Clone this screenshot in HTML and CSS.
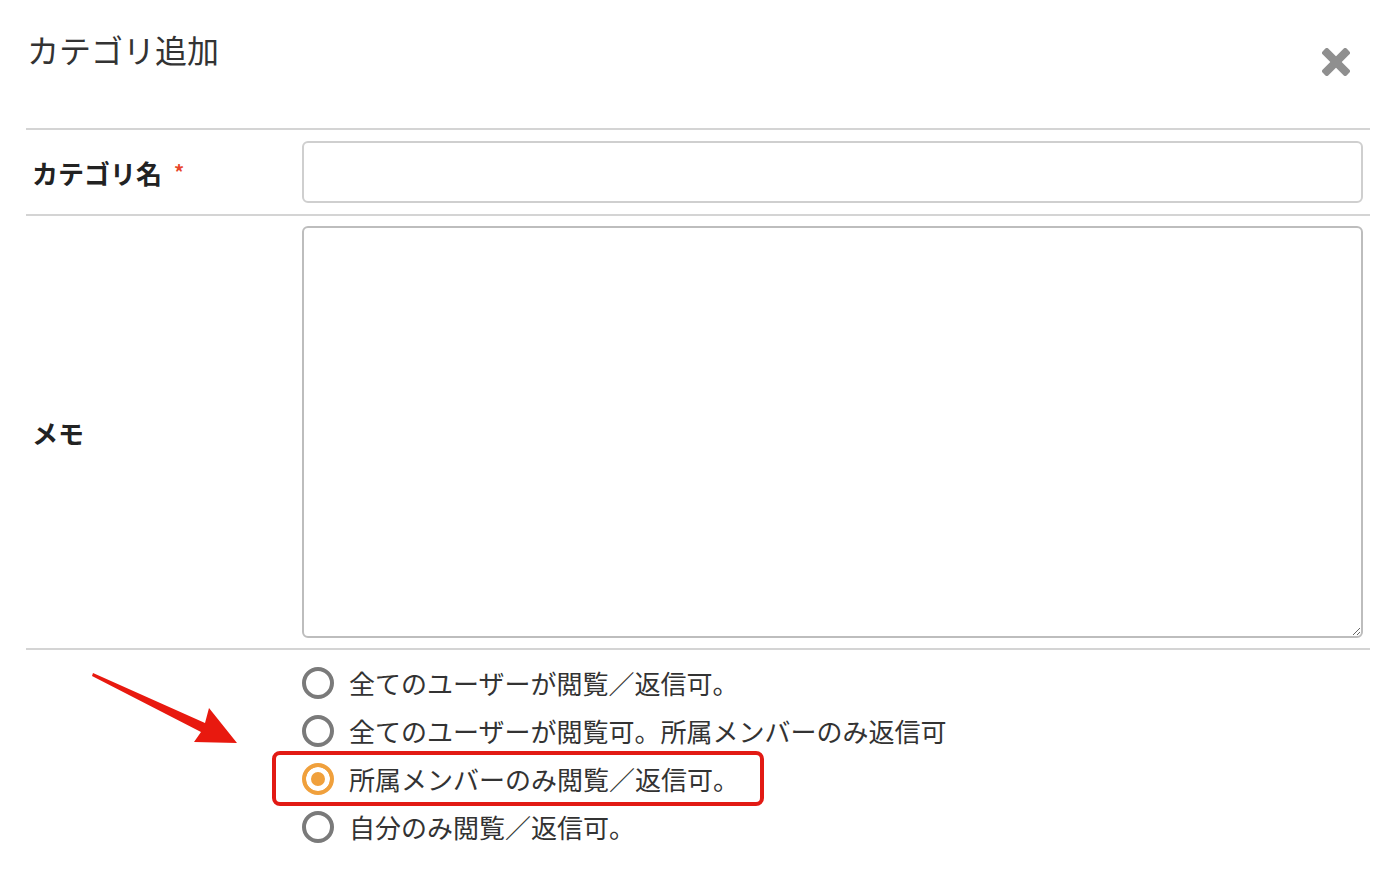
FILE: index.html
```html
<!DOCTYPE html>
<html lang="ja">
<head>
  <meta charset="UTF-8">
  <meta name="viewport" content="width=device-width, initial-scale=1.0">
  <title>カテゴリ追加</title>
  <link rel="stylesheet" href="styles.css">
</head>
<body>
  <div class="modal">
    <div class="modal-header">
      <h1 class="modal-title">カテゴリ追加</h1>
      <button class="close" type="button" aria-label="閉じる">
        <svg width="28" height="28" viewBox="0 0 28 28">
          <rect x="-3" y="10" width="34" height="8" rx="2" transform="rotate(45 14 14)" fill="#8f8f8f"/>
          <rect x="-3" y="10" width="34" height="8" rx="2" transform="rotate(-45 14 14)" fill="#8f8f8f"/>
        </svg>
      </button>
    </div>

    <form class="form">
      <div class="row row-name">
        <label class="label" for="nome">カテゴリ名<span class="req">*</span></label>
        <div class="field"><input class="input" type="text" id="nome"></div>
      </div>

      <div class="row row-memo">
        <label class="label" for="memo">メモ</label>
        <div class="field"><textarea class="textarea" id="memo"></textarea></div>
      </div>

      <div class="row row-perm">
        <div class="label"></div>
        <div class="field options">
          <!-- arrow annotation over the screenshot -->
          <svg class="arrow" width="160" height="80" viewBox="0 0 160 80">
            <polygon points="2,2 114,52 118,37 146,72 103,71 110,61 1,5" fill="#e8190f"/>
          </svg>
          <label class="option"><input type="radio" name="perm"><span>全てのユーザーが閲覧／返信可。</span></label>
          <label class="option"><input type="radio" name="perm"><span>全てのユーザーが閲覧可。所属メンバーのみ返信可</span></label>
          <label class="option marked"><input type="radio" name="perm" checked><span>所属メンバーのみ閲覧／返信可。</span></label>
          <label class="option"><input type="radio" name="perm"><span>自分のみ閲覧／返信可。</span></label>
        </div>
      </div>
    </form>
  </div>
</body>
</html>
```

FILE: styles.css
```css
body {
  margin: 0;
  background-color: #fff;
  color: #333;
  font-family: "Noto Sans CJK JP", "Noto Sans", sans-serif;
}

.modal {
  width: 1344px;
  margin-left: 26px;
}

.modal-header {
  display: flex;
  justify-content: space-between;
  align-items: flex-start;
  height: 130px;
  padding-top: 29px;
  box-sizing: border-box;
  border-bottom: 2px solid #d4d4d4;
}

.modal-title {
  margin: 0 0 0 1px;
  font-size: 32px;
  line-height: 40px;
  font-weight: 400;
  color: #333;
}

.close {
  margin: 19px 20px 0 0;
  padding: 0;
  border: none;
  background: none;
  width: 28px;
  height: 28px;
  cursor: pointer;
}

.row {
  display: flex;
  align-items: center;
  border-bottom: 2px solid #d4d4d4;
}

.row-name {
  padding: 11px 0 11px;
}

.row-memo {
  padding: 10px 0 10px;
}

.row-perm {
  border-bottom: none;
  align-items: flex-start;
  padding-top: 9px;
}

.label {
  width: 270px;
  flex-shrink: 0;
  padding-left: 6px;
  font-size: 26px;
  font-weight: 700;
  color: #222;
}

.req {
  color: #e8462a;
  font-size: 20px;
  margin-left: 12px;
  vertical-align: 4px;
}

.field {
  flex: 1;
  padding-right: 7px;
}

.input, .textarea {
  display: block;
  width: 100%;
  box-sizing: border-box;
  border: 2px solid #cfcfcf;
  border-radius: 6px;
  font-family: inherit;
  font-size: 20px;
  padding: 8px 12px;
}

.input {
  height: 62px;
}

.textarea {
  height: 412px;
  border-color: #bdbdbd;
  resize: vertical;
}

.options {
  position: relative;
}

.arrow {
  position: absolute;
  left: -211px;
  top: 12px;
}

.option {
  position: relative;
  display: flex;
  align-items: center;
  height: 48px;
  font-size: 26px;
  color: #333;
}

.option span {
  margin-top: -2px;
}

.option input {
  appearance: none;
  -webkit-appearance: none;
  margin: 0 15px 0 0;
  width: 32px;
  height: 32px;
  border: 4px solid #7a7a7a;
  border-radius: 50%;
  background: #fff;
}

.option input:checked {
  border-color: #f0a03c;
  background: #f0a03c;
  box-shadow: inset 0 0 0 5px #fff;
}

.marked::after {
  content: "";
  position: absolute;
  left: -30px;
  top: -4px;
  width: 492px;
  height: 55px;
  box-sizing: border-box;
  border: 4px solid #e21a14;
  border-radius: 8px;
  pointer-events: none;
}
```
